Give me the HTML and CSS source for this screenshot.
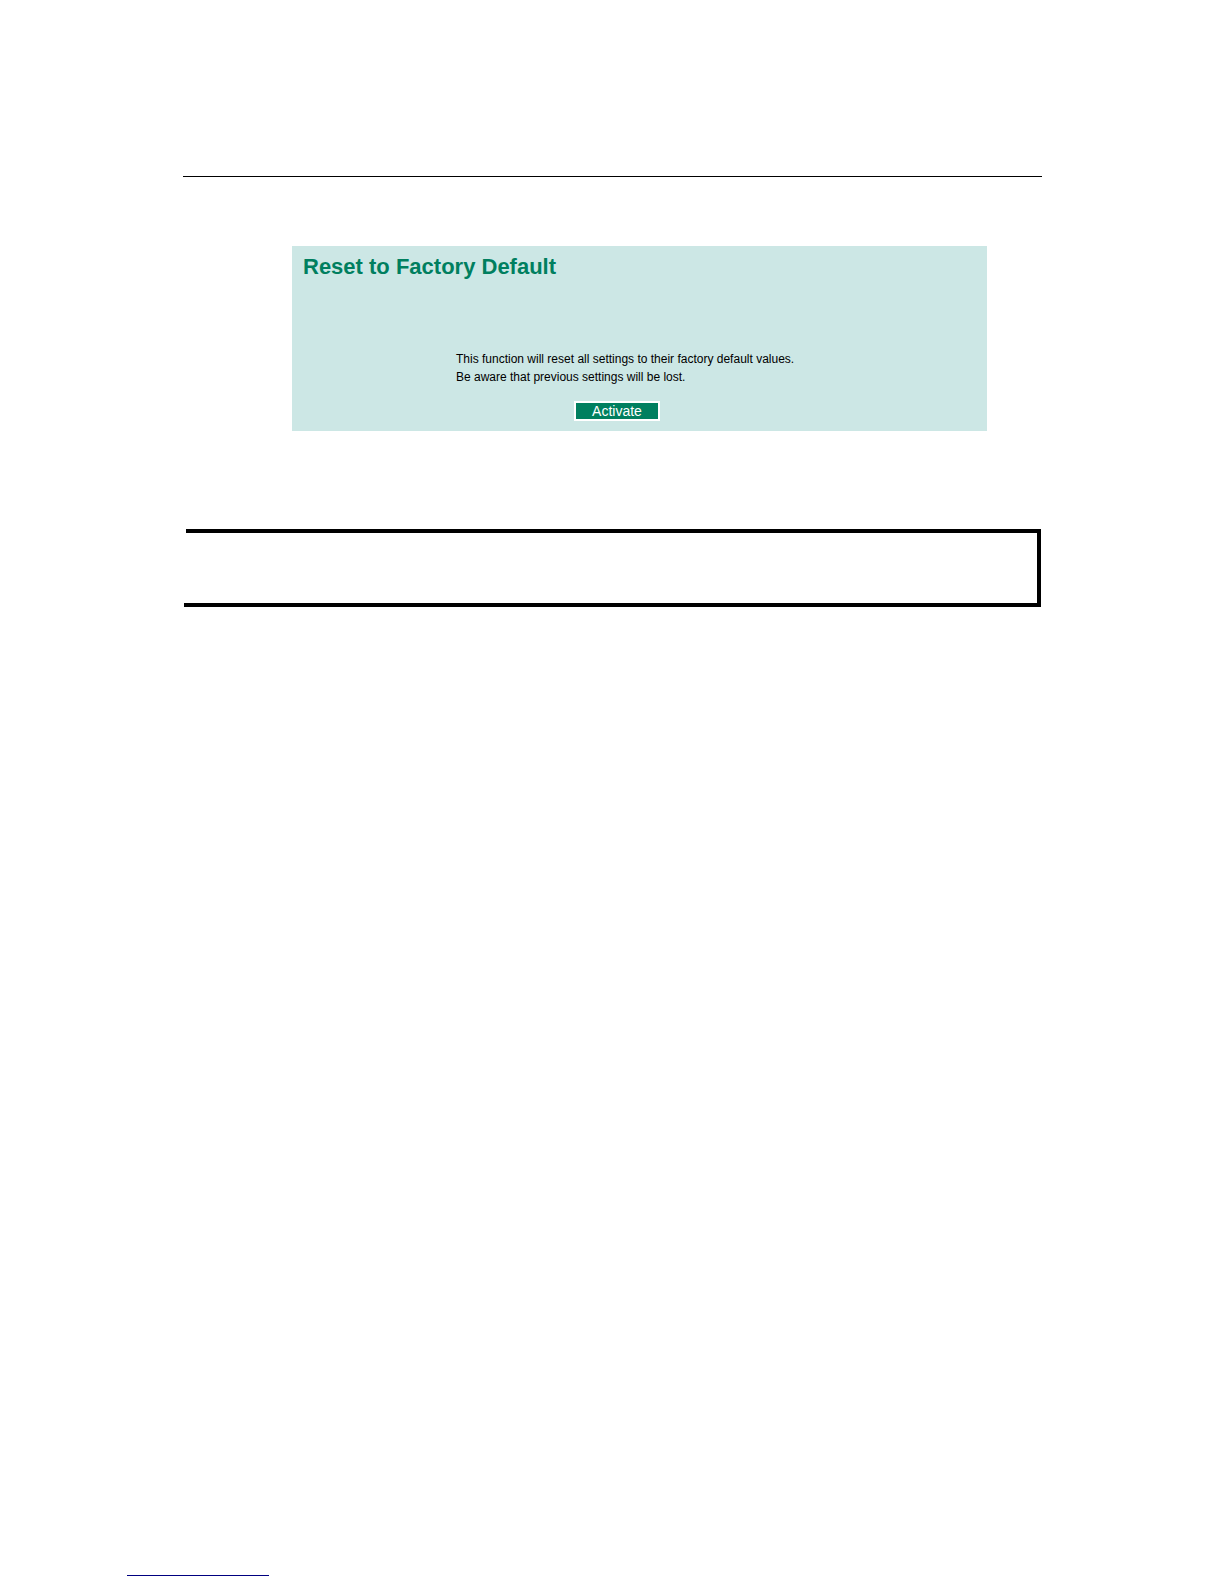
FILE: index.html
```html
<!DOCTYPE html>
<html lang="en">
<head>
    <meta charset="UTF-8">
    <meta name="viewport" content="width=device-width, initial-scale=1.0">
    <title>Reset to Factory Default</title>
    <link rel="stylesheet" href="styles.css">
</head>
<body>
    <main class="content">
        <hr class="header-rule">
        <form class="panel">
            <h1 class="title">Reset to Factory Default</h1>
            <div class="message">
                <p>This function will reset all settings to their factory default values.</p>
                <p>Be aware that previous settings will be lost.</p>
            </div>
            <button type="button" class="activate">Activate</button>
        </form>
        <div class="note">
            <div class="note-top"></div>
            <div class="note-bottom"></div>
        </div>
    </main>
    <footer class="footer">
        <hr class="footer-rule">
    </footer>
</body>
</html>
```

FILE: styles.css
```css
* {
    box-sizing: border-box;
}
body {
    display: flex;
    flex-direction: column;
    min-height: 100vh;
    margin: 0;
    background-color: white;
    font-family: "Liberation Sans", Arial, sans-serif;
}
.content {
    flex: 1;
    padding: 176px 182px 0 183px;
}
.header-rule {
    height: 1px;
    margin: 0;
    border: 0;
    background-color: black;
}
.panel {
    display: flex;
    flex-direction: column;
    margin: 69px 55px 0 109px;
    padding: 8px 11px 10px;
    background-color: #cce7e5;
}
.title {
    margin: 0;
    color: #007f5f;
    font-size: 22px;
    line-height: 26px;
}
.message {
    margin: 70px 0 15px 153px;
    color: black;
    font-size: 12px;
    line-height: 18px;
}
.message p {
    margin: 0;
}
.activate {
    width: 86px;
    height: 20px;
    margin-left: 271px;
    padding: 0;
    border: 2px solid white;
    background-color: #007f5f;
    color: white;
    font-family: inherit;
    font-size: 14px;
    line-height: 16px;
    cursor: pointer;
}
/* open on the left side */
.note {
    margin: 98px 1px 0;
    border-right: 4px solid black;
}
.note-top {
    height: 39px;
    margin-left: 2px;
    border-top: 4px solid black;
}
.note-bottom {
    height: 39px;
    border-bottom: 4px solid black;
}
.footer {
    padding: 0 127px 8px;
}
.footer-rule {
    width: 142px;
    height: 1px;
    margin: 0;
    border: 0;
    background-color: #000080;
}
```
